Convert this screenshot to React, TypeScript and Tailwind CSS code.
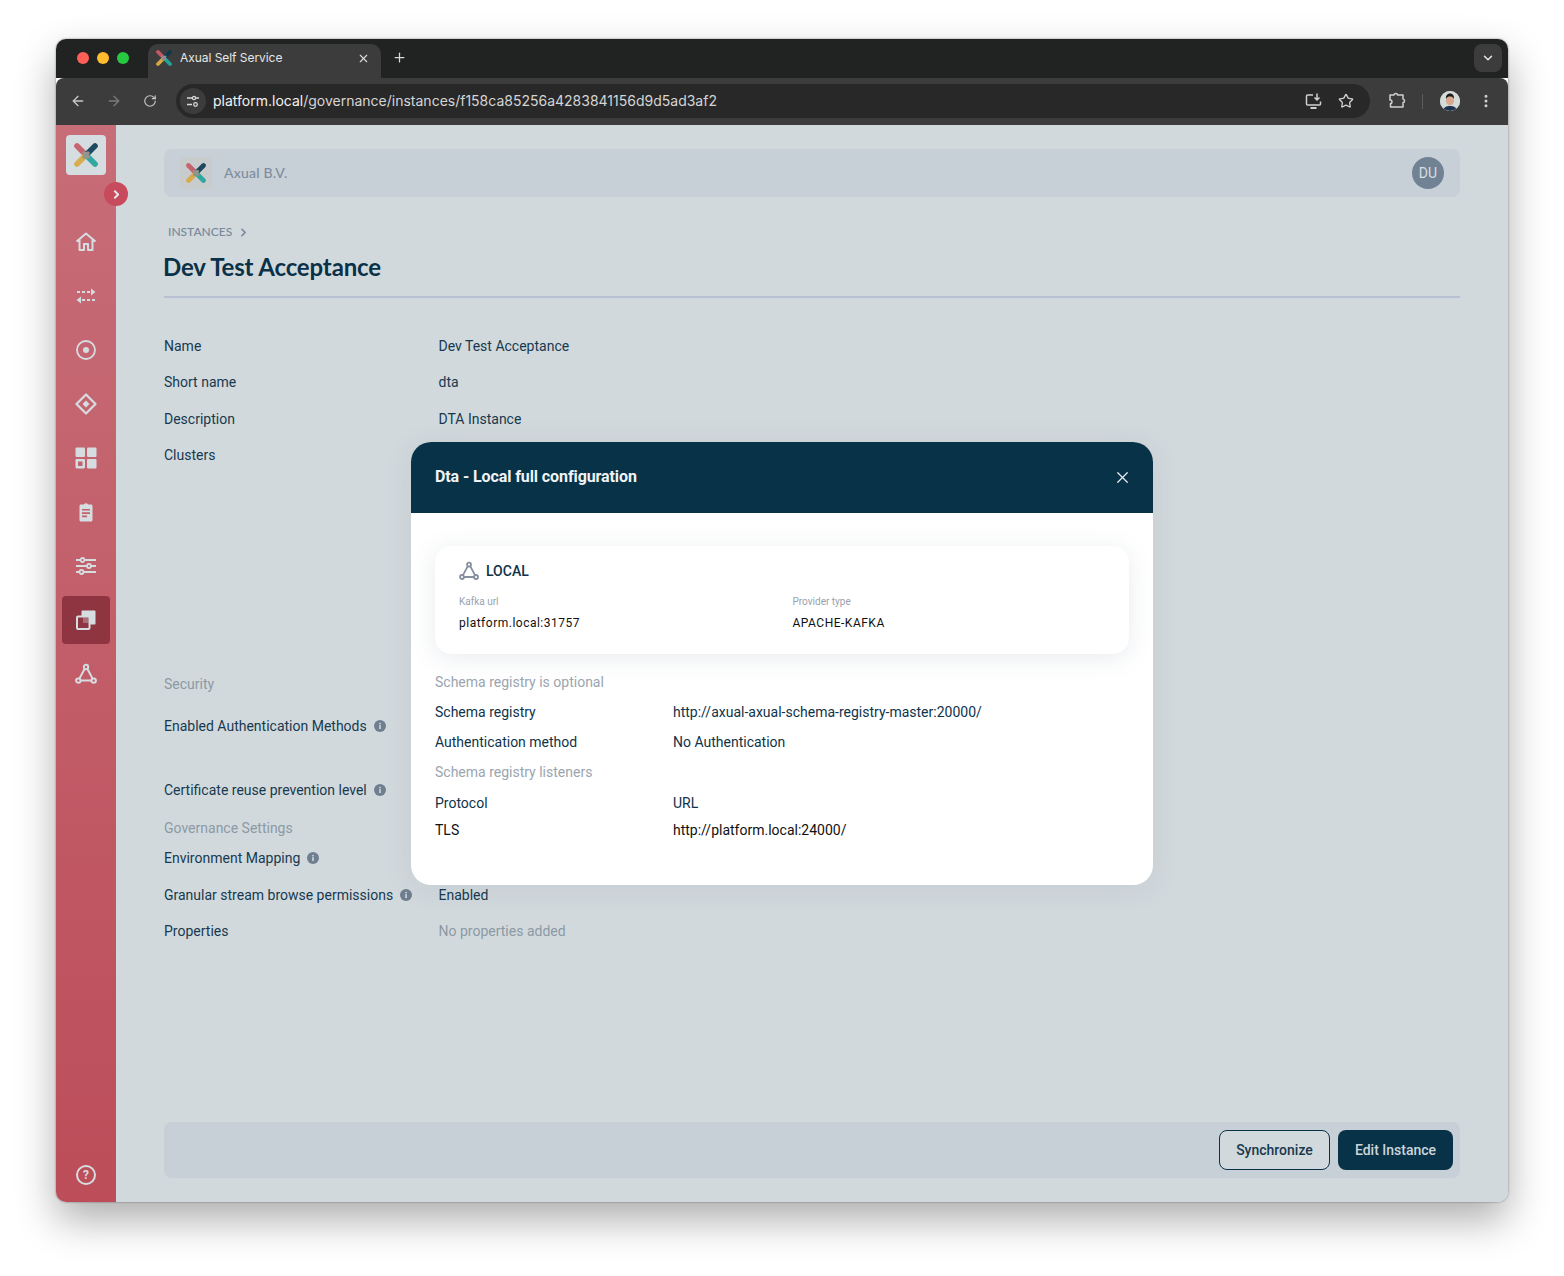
import { ChevronDown, ChevronRight, X, Plus, ArrowLeft, ArrowRight, RotateCw, Star, EllipsisVertical } from "lucide-react";

const roboto = "font-['Roboto',sans-serif]";

function Logo({ size, muted }: { size: number; muted?: boolean }) {
  return (
    <svg width={size} height={size} viewBox="0 0 24 24" fill="none" strokeLinecap="round" strokeWidth="5.6" opacity={muted ? 0.9 : 1}>
      <path d="M3 3 L12 12" stroke="#c65866" />
      <path d="M21 3 L12 12" stroke="#0c3a52" />
      <path d="M3 21 L12 12" stroke="#d8a83e" />
      <path d="M21 21 L12 12" stroke="#20a39a" />
      <path d="M10 10 L14 14 M10 14 L14 10" stroke="#8f8d85" strokeWidth="3.5" />
    </svg>
  );
}

function TriangleNodes({ color, size = 20 }: { color: string; size?: number }) {
  return (
    <svg width={size} height={size} viewBox="0 0 20 20" fill="none" stroke={color} strokeWidth="1.8">
      <path d="M8.800 5.200 L4 14.200 M11.200 5.200 L16 14.200 M5 16 H15" />
      <circle cx="10" cy="3.600" r="2" />
      <circle cx="3" cy="16" r="2" />
      <circle cx="17" cy="16" r="2" />
    </svg>
  );
}

const navIcons = [
  <svg key="home" width="22" height="22" viewBox="0 0 22 22" fill="none" stroke="#d6dde1" strokeWidth="2" strokeLinejoin="round">
    <path d="M1.500 10.500 L11 2.500 L20.500 10.500 M4.500 8.500 V19 H9 V13 H13 V19 H17.500 V8.500" />
  </svg>,
  <svg key="swap" width="22" height="22" viewBox="0 0 22 22" fill="#d6dde1">
    <path d="M2 6h3v2H2zM7 6h3v2H7zM12 6h3v2h-3zM16 3.500 L20.500 7 L16 10.500zM6 11.500 L1.500 15 L6 18.500zM7 14h3v2H7zM12 14h3v2h-3zM17 14h3v2h-3z" />
  </svg>,
  <svg key="target" width="22" height="22" viewBox="0 0 22 22" fill="none" stroke="#d6dde1" strokeWidth="1.800">
    <circle cx="11" cy="11" r="9" />
    <circle cx="11" cy="11" r="3" fill="#d6dde1" stroke="none" />
  </svg>,
  <svg key="diamond" width="22" height="22" viewBox="0 0 22 22" fill="none" stroke="#d6dde1" strokeWidth="2.200" strokeLinejoin="round">
    <path d="M11 1.500 L20.500 11 L11 20.500 L1.500 11 Z" />
    <path d="M11 7.500 L14.500 11 L11 14.500 L7.500 11 Z" fill="#d6dde1" stroke="none" />
  </svg>,
  <svg key="grid" width="22" height="22" viewBox="0 0 22 22" fill="#d6dde1">
    <rect x="0.500" y="0.500" width="9.500" height="9.500" rx="1.200" />
    <rect x="12" y="0.500" width="9.500" height="9.500" rx="1.200" />
    <rect x="12" y="12" width="9.500" height="9.500" rx="1.200" />
    <path fillRule="evenodd" d="M1.700 12h7.100c.7 0 1.200.5 1.200 1.200v7.100c0 .7-.5 1.200-1.200 1.200H1.700c-.7 0-1.200-.5-1.200-1.200v-7.100c0-.7.5-1.200 1.200-1.200zM3 14.500v4.500h4.500v-4.500z" />
  </svg>,
  <svg key="clip" width="22" height="22" viewBox="0 0 22 22">
    <path fill="#d6dde1" d="M6 3.500h3a2.300 2.300 0 0 1 4 0h3c.9 0 1.500.7 1.500 1.500v14c0 .9-.7 1.500-1.500 1.500H6c-.9 0-1.500-.7-1.500-1.500V5c0-.9.7-1.500 1.500-1.500z" />
    <path fill="#c2606c" d="M7 8h8v1.600H7zM7 11.300h8v1.600H7zM7 14.600h5v1.600H7z" />
  </svg>,
  <svg key="sliders" width="22" height="22" viewBox="0 0 22 22" fill="none" stroke="#d6dde1" strokeWidth="1.800">
    <path d="M1 5h4.500M9.500 5H21M1 11h11M16 11h5M1 17h3.500M8.500 17H21" />
    <circle cx="7.500" cy="5" r="2" />
    <circle cx="14" cy="11" r="2" />
    <circle cx="6.500" cy="17" r="2" />
  </svg>,
  <svg key="copy" width="22" height="22" viewBox="0 0 22 22" fill="none">
    <path fill="#d6dde1" d="M7.500 1.500h12c.6 0 1 .4 1 1v12c0 .6-.4 1-1 1H15V8c0-.6-.4-1-1-1H6.500V2.500c0-.6.400-1 1-1z" />
    <rect x="2" y="7.500" width="12.500" height="12.500" rx="1" stroke="#d6dde1" strokeWidth="2" />
    <rect x="8" y="8.500" width="5.500" height="5.500" fill="#d6dde1" opacity="0.35" />
  </svg>,
  <TriangleNodes key="nodes" color="#d6dde1" size={22} />,
];

function InfoDot() {
  return (
    <svg width="12" height="12" viewBox="0 0 12 12">
      <circle cx="6" cy="6" r="6" fill="#6f7f90" />
      <rect x="5.200" y="5.200" width="1.600" height="3.800" fill="#d2d9dd" />
      <rect x="5.200" y="2.900" width="1.600" height="1.500" fill="#d2d9dd" />
    </svg>
  );
}

function Row({ label, value, info, className = "" }: { label: string; value?: string; info?: boolean; className?: string }) {
  return (
    <div className={`flex items-center h-5 text-[14px] text-[#17394f] ${className}`}>
      <div className="w-[274.5px] shrink-0 flex items-center gap-[7px]">
        <span>{label}</span>
        {info && <InfoDot />}
      </div>
      {value && <span className={value.startsWith("No ") ? "text-[#8b99a5]" : ""}>{value}</span>}
    </div>
  );
}

function ModalRow({ label, value, dark }: { label: string; value: string; dark?: boolean }) {
  return (
    <div className="flex items-center h-5">
      <span className={`w-[238px] shrink-0 ${dark ? "text-[#111]" : ""}`}>{label}</span>
      <span className={dark ? "text-[#111]" : ""}>{value}</span>
    </div>
  );
}

function ConfigModal() {
  return (
    <div className="absolute left-[295px] top-[317px] w-[742px] h-[443px] bg-white rounded-[20px] overflow-hidden shadow-[0_4px_30px_rgba(40,60,80,0.08)]">
      <div className="h-[71px] bg-[#083248] flex items-center justify-between pl-6 pr-[21px] pb-[1px]">
        <span className="text-[16px] font-bold text-[#f0f3f5] tracking-[-0.1px]">Dta - Local full configuration</span>
        <X size={19} color="#e8edf0" strokeWidth={1.6} />
      </div>
      <div className="px-6 pt-[33px] text-[14px] text-[#0f3349]">
        <div className="h-[108px] rounded-2xl bg-white shadow-[0_4px_24px_rgba(90,110,140,0.14)] pl-6 pt-[15px]">
          <div className="flex items-center gap-[7px] h-5">
            <TriangleNodes color="#868f9f" />
            <span className="font-medium">LOCAL</span>
          </div>
          <div className="flex mt-[15px]">
            <div className="w-[333.500px]">
              <div className="text-[10px] leading-3 text-[#98a2ae]">Kafka url</div>
              <div className="text-[12px] leading-4 mt-[7px] tracking-[0.5px] text-[#111]">platform.local:31757</div>
            </div>
            <div>
              <div className="text-[10px] leading-3 text-[#98a2ae]">Provider type</div>
              <div className="text-[12px] leading-4 mt-[7px] tracking-[0.5px] text-[#111]">APACHE-KAFKA</div>
            </div>
          </div>
        </div>
        <div className="mt-[18px] h-5 flex items-center text-[#9aa5af]">Schema registry is optional</div>
        <div className="mt-[10px]"><ModalRow label="Schema registry" value="http://axual-axual-schema-registry-master:20000/" /></div>
        <div className="mt-[10px]"><ModalRow label="Authentication method" value="No Authentication" /></div>
        <div className="mt-[10px] h-5 flex items-center text-[#9aa5af]">Schema registry listeners</div>
        <div className="mt-[11px]"><ModalRow label="Protocol" value="URL" /></div>
        <div className="mt-[7px]"><ModalRow label="TLS" value="http://platform.local:24000/" dark /></div>
      </div>
    </div>
  );
}

function Sidebar() {
  return (
    <div className="relative z-10 w-[60px] shrink-0 bg-gradient-to-b from-[#c76d78] to-[#bc4d59] flex flex-col items-center pt-[10px] pb-[17px]">
      <div className="w-10 h-10 rounded-[4px] bg-[#d6dde1] flex items-center justify-center">
        <Logo size={24} muted />
      </div>
      <div className="absolute left-12 top-[57px] w-6 h-6 rounded-full bg-[#c74b5c] flex items-center justify-center">
        <ChevronRight size={13} color="#e6e9ec" strokeWidth={3.5} />
      </div>
      <div className="mt-[43px] flex flex-col gap-[6px]">
        {navIcons.map((icon, i) => (
          <div key={i} className={`w-12 h-12 rounded-[4px] flex items-center justify-center ${i === 7 ? "bg-[#8e3541]" : ""}`}>
            {icon}
          </div>
        ))}
      </div>
      <div className="mt-auto w-5 h-5 rounded-full border-2 border-[#d6dde1] flex items-center justify-center text-[12px] font-bold leading-none text-[#d6dde1]">
        ?
      </div>
    </div>
  );
}

function BrowserChrome() {
  return (
    <>
      <div className="h-[39px] bg-[#212322] flex items-end pl-[92px] relative font-['Inter',sans-serif]">
        <div className="absolute left-[21px] top-[13px] flex gap-2">
          <span className="w-3 h-3 rounded-full bg-[#ff5f57]" />
          <span className="w-3 h-3 rounded-full bg-[#febc2e]" />
          <span className="w-3 h-3 rounded-full bg-[#28c840]" />
        </div>
        <div className="w-[233px] h-[34px] bg-[#3c3c3c] rounded-t-[10px] flex items-center pl-[8px] pr-[11px] pb-[6px]">
          <Logo size={16} />
          <span className="ml-2 text-[12px] tracking-[-0.05px] text-[#e6e6e6] flex-1">Axual Self Service</span>
          <X size={13} color="#dcdcdc" strokeWidth={2} />
        </div>
        <Plus size={15} color="#d8d8d8" strokeWidth={2} className="ml-[11px] mb-[13px]" />
        <div className="absolute right-[6px] top-[5px] w-7 h-7 rounded-lg bg-[#3c3c3c] flex items-center justify-center">
          <ChevronDown size={14} color="#e6e6e6" strokeWidth={2.5} />
        </div>
      </div>
      <div className="h-[47px] bg-[#3c3c3c] rounded-t-[8px] flex items-center pl-[14px] pr-[14px] pb-[1px] font-['Inter',sans-serif]">
        <ArrowLeft size={16} color="#c8c8c8" strokeWidth={2} />
        <ArrowRight size={16} color="#7a7a7a" strokeWidth={2} className="ml-5" />
        <RotateCw size={14} color="#c8c8c8" strokeWidth={2} className="ml-[21px]" />
        <div className="ml-[19px] w-[1194px] h-[34px] rounded-full bg-[#282828] flex items-center pl-[4px] pr-4">
          <div className="w-[26px] h-[26px] rounded-full bg-[#3c3c3c] flex items-center justify-center">
            <svg width="14" height="14" viewBox="0 0 14 14" fill="none" stroke="#d8d8d8" strokeWidth="1.300">
              <path d="M1 4h5M1 10.500h5M10 4h3" />
              <circle cx="8" cy="4" r="1.600" />
              <circle cx="9.500" cy="10.500" r="1.800" />
            </svg>
          </div>
          <span className="ml-[7px] -mt-[1px] text-[14px] text-[#d5d5d5]">
            <span className="text-[#f2f2f2]">platform.local</span>/governance/instances/f158ca85256a4283841156d9d5ad3af2
          </span>
          <svg className="ml-auto" width="18" height="18" viewBox="0 0 18 18" fill="none" stroke="#cfcfcf" strokeWidth="1.500">
            <path d="M8 3H2.500C2 3 1.500 3.500 1.500 4v8c0 .5.500 1 1 1h12c.5 0 1-.5 1-1V9.500" />
            <path d="M5.500 16h6" strokeWidth="2" />
            <path d="M12 1.500V7.500M9.500 5.500 L12 8 L14.500 5.500" />
          </svg>
          <Star size={16} color="#cfcfcf" strokeWidth={2} className="ml-[15px]" />
        </div>
        <svg className="ml-[18px]" width="18" height="18" viewBox="0 0 18 18" fill="none" stroke="#cfcfcf" strokeWidth="1.500" strokeLinejoin="round">
          <path d="M2 3h4c0-2 3.500-2 3.500 0H15v4c2 0 2 3.500 0 3.500V15H2.500v-3.500c2 .3 2-4-.5-3.500z" />
        </svg>
        <div className="ml-[16px] w-px h-[15px] bg-[#5c5c5c]" />
        <div className="ml-[17px] w-5 h-5 rounded-full overflow-hidden bg-[#cfdadc]">
          <svg width="20" height="20" viewBox="0 0 20 20">
            <rect width="20" height="20" fill="#d3dcd9" />
            <path d="M3 20c.5-4 3.500-5 7-5s6.500 1 7 5z" fill="#1f3350" />
            <ellipse cx="10" cy="9.500" rx="4" ry="5" fill="#d9a78e" />
            <path d="M6 8c-.5-4 2-5.500 4-5.500s4.500 1.500 4 5.500c-1-2-2-2.500-4-2.500S7 6 6 8z" fill="#1c1a1a" />
          </svg>
        </div>
        <EllipsisVertical size={16} color="#cfcfcf" strokeWidth={2.5} className="ml-[18px]" />
      </div>
    </>
  );
}

export default function App() {
  return (
    <div className={`w-[1564px] h-[1276px] bg-white overflow-hidden pt-[39px] pl-[56px] ${roboto}`}>
      <div className="w-[1452px] h-[1163px] rounded-[10px] overflow-hidden flex flex-col shadow-[0_18px_40px_rgba(0,0,0,0.32),0_0_2px_rgba(0,0,0,0.5)]">
        <BrowserChrome />
        <div className="flex-1 flex min-h-0">
          <Sidebar />
          <div className="relative flex-1 bg-[#d2d9dd] pt-6 pl-12 pr-12 pb-6 flex flex-col">
            <div className="h-12 rounded-lg bg-[#c7cfd7] flex items-center pl-4 pr-4">
              <div className="w-8 h-8 rounded-[4px] bg-[#c8cccd] flex items-center justify-center">
                <Logo size={20} muted />
              </div>
              <span className="ml-[12px] -mt-[1px] text-[14px] font-['Lato',sans-serif] font-medium tracking-[0.2px] text-[#7e8d9c]">Axual B.V.</span>
              <div className="ml-auto w-8 h-8 rounded-full bg-[#708294] flex items-center justify-center text-[14px] text-[#d8dee2]">DU</div>
            </div>
            <div className="mt-[27px] pl-[4px] h-4 flex items-center text-[12px] font-['Lato',sans-serif] font-medium text-[#76889a]">
              INSTANCES
              <ChevronRight size={13} color="#76889a" strokeWidth={3} className="ml-[5px]" />
            </div>
            <h1 className="mt-[9px] -ml-px h-9 leading-9 text-[24px] font-bold font-['Lato',sans-serif] tracking-[-0.15px] text-[#0b3148]">Dev Test Acceptance</h1>
            <div className="mt-[11px] h-[2px] bg-[#b7c1d3]" />
            <Row label="Name" value="Dev Test Acceptance" className="mt-[38px]" />
            <Row label="Short name" value="dta" className="mt-[16px]" />
            <Row label="Description" value="DTA Instance" className="mt-[17px]" />
            <Row label="Clusters" className="mt-[16px]" />
            <div className="mt-[209px] h-5 flex items-center text-[14px] text-[#8b99a5]">Security</div>
            <Row label="Enabled Authentication Methods" info className="mt-[22px]" />
            <Row label="Certificate reuse prevention level" info className="mt-[44px]" />
            <div className="mt-[18px] h-5 flex items-center text-[14px] text-[#8b99a5]">Governance Settings</div>
            <Row label="Environment Mapping" info className="mt-[10px]" />
            <Row label="Granular stream browse permissions" value="Enabled" info className="mt-[17px]" />
            <Row label="Properties" value="No properties added" className="mt-[16px]" />
            <div className="mt-auto h-14 rounded-lg bg-[#c7cfd7] flex items-center justify-end gap-2 pr-[7px]">
              <button className="h-10 w-[111px] rounded-lg border border-[#083248] text-[14px] font-medium text-[#17394f] bg-[#d2d9dd]">Synchronize</button>
              <button className="h-10 w-[115px] rounded-lg bg-[#083248] text-[14px] font-medium text-[#ccd5da]">Edit Instance</button>
            </div>
            <ConfigModal />
          </div>
        </div>
      </div>
    </div>
  );
}
